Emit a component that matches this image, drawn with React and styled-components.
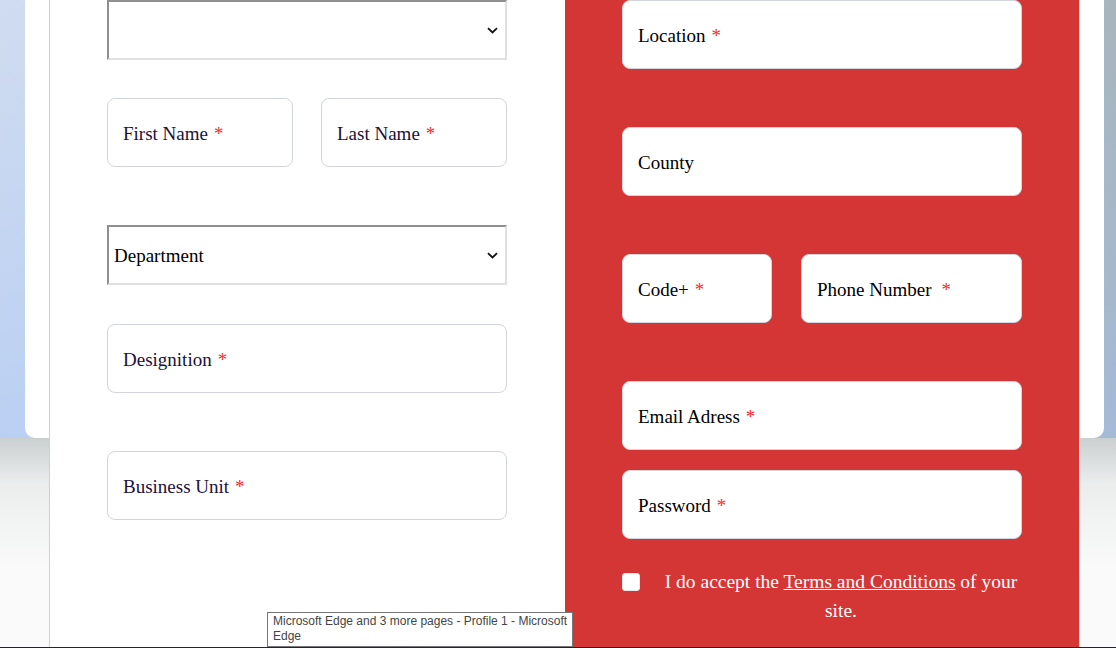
import React from "react";
import styled, { createGlobalStyle } from "styled-components";

const Global = createGlobalStyle`
   html, body {
      margin: 0;
      padding: 0;
      overflow: hidden;
   }
   body {
      font-family: "Liberation Serif", "Times New Roman", serif;
   }
`;

const Screen = styled.div`
   width: 1116px;
   height: 648px;
   display: flex;
   flex-direction: column;
`;

const Stage = styled.div`
   position: relative;
   height: 647px;
   display: flex;
   flex-direction: column;
   overflow: hidden;
`;

const Taskbar = styled.div`
   height: 1px;
   background: #1e272b;
`;

const Backdrop = styled.div`
   height: 438px;
   display: flex;
   padding: 0 12px 0 25px;
   background:
      linear-gradient(to bottom, rgba(160, 192, 245, 0) 0%, rgba(160, 192, 245, 0.45) 100%),
      linear-gradient(to right, #d0dcf0 0%, #c6d4ee 45%, #afbcc6 90%, #a7b5bc 100%);
`;

const BackCard = styled.div`
   flex: 1;
   background: #ffffff;
   border-radius: 0 0 10px 10px;
`;

const Shade = styled.div`
   flex: 1;
   background:
      linear-gradient(to bottom, rgba(200, 205, 206, 0.95) 0px, rgba(228, 231, 231, 0.7) 45px, rgba(250, 250, 250, 0) 130px),
      #fafafa;
`;

const Modal = styled.div`
   position: absolute;
   top: 0;
   left: 49px;
   width: 1031px;
   height: 100%;
   display: grid;
   grid-template-columns: 516px 515px;
`;

const LeftPane = styled.div`
   background: #ffffff;
   border-left: 1px solid #cfcfcf;
   padding-left: 57px;
   display: flex;
   flex-direction: column;
`;

const RightPane = styled.div`
   background: #d43636;
   border-right: 1px solid #e6dcdc;
   padding-left: 57px;
   display: flex;
   flex-direction: column;
`;

const SelectBox = styled.div`
   box-sizing: border-box;
   width: 400px;
   height: 60px;
   margin-top: ${(p) => p.$mt || 0}px;
   border: 2px solid;
   border-color: #8f8f8f #e0e0e0 #e0e0e0 #8f8f8f;
   background: #ffffff;
   display: flex;
   align-items: center;
   justify-content: space-between;
   padding: 1px 7px 0 5px;
   font-size: 19px;
   color: #000000;
`;

const Row = styled.div`
   width: 400px;
   margin-top: ${(p) => p.$mt || 0}px;
   display: grid;
   grid-template-columns: ${(p) => p.$cols};
   column-gap: ${(p) => p.$gap}px;
`;

const Field = styled.div`
   box-sizing: border-box;
   width: ${(p) => (p.$w ? `${p.$w}px` : "100%")};
   height: 69px;
   margin-top: ${(p) => p.$mt || 0}px;
   border: 1px solid #d1d5db;
   border-radius: 8px;
   background: #ffffff;
   display: flex;
   align-items: center;
   padding: 2px 0 0 15px;
   font-size: 19px;
   color: ${(p) => p.$color || "#000000"};
`;

const Star = styled.span`
   color: #ff2626;
   margin-left: ${(p) => p.$ml || 6}px;
`;

const Terms = styled.div`
   width: 420px;
   margin-top: 28px;
   display: flex;
   align-items: flex-start;
`;

const Check = styled.span`
   flex: none;
   box-sizing: border-box;
   width: 18px;
   height: 18px;
   margin-top: 6px;
   border-radius: 3px;
   border: 1px solid #e8e8e8;
   background: #ffffff;
`;

const TermsText = styled.p`
   margin: 0 0 0 21px;
   width: 360px;
   font-size: 19.5px;
   line-height: 29px;
   text-align: center;
   color: #ffffff;

   a {
      color: #ffffff;
      text-decoration: underline;
   }
`;

const Tooltip = styled.div`
   position: absolute;
   left: 267px;
   bottom: 0;
   width: 306px;
   box-sizing: border-box;
   padding: 1px 5px 2px 5px;
   background: #ffffff;
   border: 1px solid #767676;
   font-family: "Liberation Sans", Arial, sans-serif;
   font-size: 12px;
   line-height: 15px;
   white-space: nowrap;
   color: #444444;
`;

const Chevron = () => (
   <svg width="11" height="7" viewBox="0 0 11 7">
      <path d="M1 1.2 L5.5 5.5 L10 1.2" fill="none" stroke="#111" strokeWidth="1.8" />
   </svg>
);

const LEFT_LABEL = "#21103a";

export default function App() {
   return (
      <Screen>
         <Global />
         <Stage>
            <Backdrop>
               <BackCard />
            </Backdrop>
            <Shade />

            <Modal>
               <LeftPane>
                  <SelectBox>
                     <span />
                     <Chevron />
                  </SelectBox>

                  <Row $mt={38} $cols="1fr 1fr" $gap={28}>
                     <Field $color={LEFT_LABEL}>
                        First Name <Star>*</Star>
                     </Field>
                     <Field $color={LEFT_LABEL}>
                        Last Name <Star>*</Star>
                     </Field>
                  </Row>

                  <SelectBox $mt={58}>
                     <span>Department</span>
                     <Chevron />
                  </SelectBox>

                  <Field $w={400} $mt={39} $color={LEFT_LABEL}>
                     Designition <Star>*</Star>
                  </Field>

                  <Field $w={400} $mt={58} $color={LEFT_LABEL}>
                     Business Unit <Star>*</Star>
                  </Field>
               </LeftPane>

               <RightPane>
                  <Field $w={400}>
                     Location <Star>*</Star>
                  </Field>

                  <Field $w={400} $mt={58}>
                     County
                  </Field>

                  <Row $mt={58} $cols="150px 221px" $gap={29}>
                     <Field>
                        Code+ <Star>*</Star>
                     </Field>
                     <Field>
                        Phone Number <Star $ml={10}>*</Star>
                     </Field>
                  </Row>

                  <Field $w={400} $mt={58}>
                     Email Adress <Star>*</Star>
                  </Field>

                  <Field $w={400} $mt={20}>
                     Password <Star>*</Star>
                  </Field>

                  <Terms>
                     <Check />
                     <TermsText>
                        I do accept the <a href="#terms">Terms and Conditions</a> of your site.
                     </TermsText>
                  </Terms>
               </RightPane>
            </Modal>

            <Tooltip>
               Microsoft Edge and 3 more pages - Profile 1 - Microsoft
               <br />
               Edge
            </Tooltip>
         </Stage>
         <Taskbar />
      </Screen>
   );
}
